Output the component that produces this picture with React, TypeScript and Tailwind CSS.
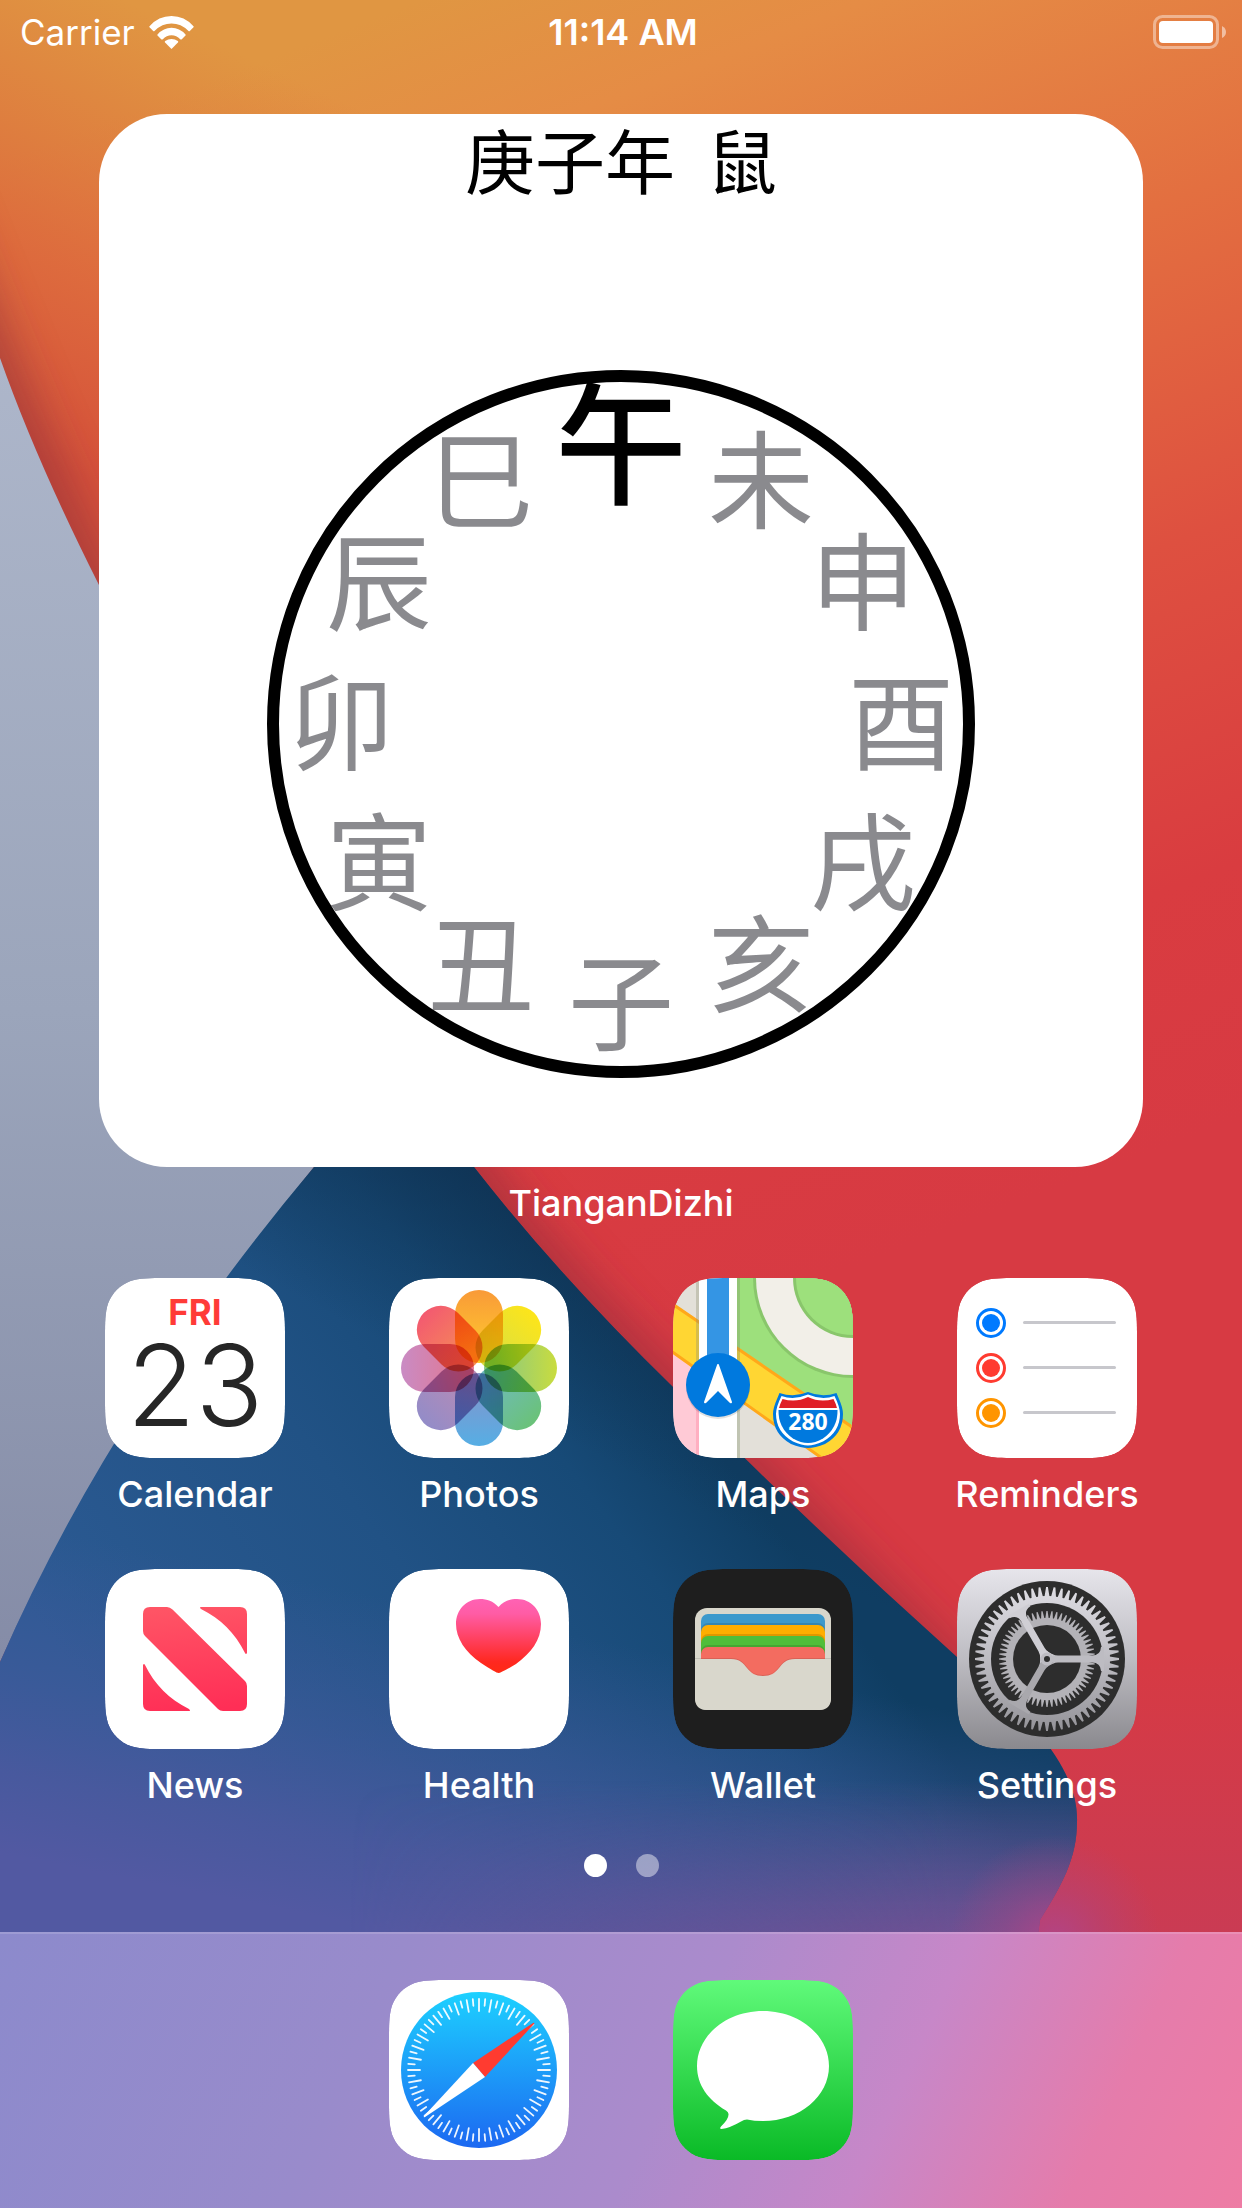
import type { ReactNode } from "react";

/* Continuous-corner outline used by every home-screen icon (180 unit box). */
function squircle(size: number, r: number): string {
  const a = 1.528665 * r;
  const b = 1.088493 * r;
  const c = 0.868407 * r;
  const d = 0.631494 * r;
  const e = 0.074911 * r;
  const f = 0.372824 * r;
  const g = 0.16906 * r;
  const s = size;
  return [
    `M${a},0 H${s - a}`,
    `C${s - b},0 ${s - c},0 ${s - d},${e}`,
    `C${s - f},${g} ${s - g},${f} ${s - e},${d}`,
    `C${s},${c} ${s},${b} ${s},${a} V${s - a}`,
    `C${s},${s - b} ${s},${s - c} ${s - e},${s - d}`,
    `C${s - g},${s - f} ${s - f},${s - g} ${s - d},${s - e}`,
    `C${s - c},${s} ${s - b},${s} ${s - a},${s} H${a}`,
    `C${b},${s} ${c},${s} ${d},${s - e}`,
    `C${f},${s - g} ${g},${s - f} ${e},${s - d}`,
    `C0,${s - c} 0,${s - b} 0,${s - a} V${a}`,
    `C0,${b} 0,${c} ${e},${d}`,
    `C${g},${f} ${f},${g} ${d},${e}`,
    `C${c},0 ${b},0 ${a},0 Z`,
  ].join(" ");
}

const ICON_OUTLINE = squircle(180, 40.5);

function gear(tips: number, roots: number, teeth: number): string {
  const step = (Math.PI * 2) / teeth;
  const pt = (r: number, t: number) =>
    `${(90 + r * Math.cos(t)).toFixed(2)},${(90 + r * Math.sin(t)).toFixed(2)}`;
  const points: string[] = [];
  for (let i = 0; i < teeth; i++) {
    const t = i * step;
    points.push(pt(roots, t - step * 0.38), pt(tips, t - step * 0.12), pt(tips, t + step * 0.12), pt(roots, t + step * 0.38));
  }
  return `M${points.join("L")}Z`;
}

function IconFrame({ id, fill, children }: { id: string; fill: string; children?: ReactNode }) {
  return (
    <svg viewBox="0 0 180 180" className="isolate size-[180px]" aria-hidden="true">
      <defs>
        <clipPath id={`${id}-clip`}>
          <path d={ICON_OUTLINE} />
        </clipPath>
        <linearGradient id="settings-bg" gradientUnits="userSpaceOnUse" x1="0" y1="0" x2="0" y2="180">
          <stop offset="0" stopColor="#e6e5eb" />
          <stop offset="0.5" stopColor="#bdbcc2" />
          <stop offset="1" stopColor="#8a898e" />
        </linearGradient>
        <linearGradient id="messages-bg" x1="0" y1="0" x2="0" y2="1">
          <stop offset="0" stopColor="#60fa7a" />
          <stop offset="1" stopColor="#0aba26" />
        </linearGradient>
      </defs>
      <g clipPath={`url(#${id}-clip)`}>
        <path d={ICON_OUTLINE} fill={fill} />
        {children}
      </g>
    </svg>
  );
}

function CalendarIcon() {
  return (
    <IconFrame id="calendar" fill="#fff">
      <text x="90" y="47" textAnchor="middle" className="fill-[#ff3b37] font-['Inter',sans-serif] text-[35px] font-bold">
        FRI
      </text>
      <text x="90" y="148" textAnchor="middle" className="fill-[#262626] font-['Inter',sans-serif] text-[112px] font-light">
        23
      </text>
    </IconFrame>
  );
}

const PETALS = [
  { angle: 0, outer: "#f99a38", inner: "#fec92e" },
  { angle: 45, outer: "#fde51a", inner: "#d8df42" },
  { angle: 90, outer: "#c9dc3f", inner: "#86c884" },
  { angle: 135, outer: "#6ac278", inner: "#70babf" },
  { angle: 180, outer: "#56aee4", inner: "#8494cc" },
  { angle: 225, outer: "#938cc8", inner: "#ba8bb4" },
  { angle: 270, outer: "#c98bc4", inner: "#e37790" },
  { angle: 315, outer: "#f35a70", inner: "#f58d56" },
];

function PhotosIcon() {
  return (
    <IconFrame id="photos" fill="#fff">
      {PETALS.map((p) => (
        <g key={p.angle} className="mix-blend-multiply">
          <linearGradient id={`petal-${p.angle}`} gradientUnits="userSpaceOnUse" x1="90" y1="12" x2="90" y2="76">
            <stop offset="0" stopColor={p.outer} />
            <stop offset="1" stopColor={p.inner} />
          </linearGradient>
          <rect x="66" y="12" width="48" height="73" rx="24" fill={`url(#petal-${p.angle})`} transform={`rotate(${p.angle} 90 90)`} />
        </g>
      ))}
    </IconFrame>
  );
}

function MapsIcon() {
  return (
    <IconFrame id="maps" fill="#e3e0d9">
      <path d="M0 73 L26 91 V180 H0Z" fill="#ffcad6" />
      <path d="M64 0 H180 V150 L64 70Z" fill="#9de07c" />
      <circle cx="180" cy="0" r="100" fill="#89c66b" />
      <circle cx="180" cy="0" r="97" fill="#f2efe8" />
      <circle cx="180" cy="0" r="60" fill="#89c66b" />
      <circle cx="180" cy="0" r="57" fill="#9de07c" />
      <path d="M-2 24 L182 150 V203 L-2 72Z" fill="#ffd633" />
      <path d="M-2 25 L182 151 M-2 73 L160 188" stroke="#ffa81a" strokeWidth="3" />
      <path d="M23 0 H26 V180 H23Z" fill="#8d8f74" opacity="0.35" />
      <path d="M23 89 H26 V180 H23Z" fill="#ffafc1" />
      <path d="M64 0 H67 V180 H64Z" fill="#7d8f6a" opacity="0.35" />
      <path d="M26 0 H64 V180 H26Z" fill="#fff" />
      <path d="M34 0 H56 V100 H34Z" fill="#3495e4" />
      <circle cx="45" cy="109" r="32" fill="#000" opacity="0.12" />
      <circle cx="45" cy="107" r="32" fill="#0079de" />
      <path d="M45 86 Q46 86 46 87 L59 124 Q59 126 57 125 L45 113 L33 125 Q31 126 31 124 L44 87 Q44 86 45 86Z" fill="#fff" />
      <path
        d="M106.500 115 Q121 120 135 114 Q149 120 163.500 115 L166 121 Q170 130 170 136 Q170 156 152 166 Q142 170 135 170 Q128 170 118 166 Q100 156 100 136 Q100 130 104 121Z"
        fill="#0079de"
      />
      <path
        d="M108.500 118 Q121 122.500 135 116.500 Q149 122.500 161.500 118 Q167 129 167 136 Q167 154 150 163.500 Q141 167.500 135 167.500 Q129 167.500 120 163.500 Q103 154 103 136 Q103 129 108.500 118Z"
        fill="#fff"
      />
      <path d="M109.500 121 Q123 125 135 119 Q147 125 160.500 121 Q163 126 164 130 H106 Q107 126 109.500 121Z" fill="#e01f26" />
      <path d="M105.500 132 H164.500 Q165 150 150 160.500 Q142 165 135 165 Q128 165 120 160.500 Q105 150 105.500 132Z" fill="#0079de" />
      <text x="135" y="152" textAnchor="middle" className="fill-white font-['Open_Sans',sans-serif] text-[23px] font-bold">
        280
      </text>
    </IconFrame>
  );
}

function RemindersIcon() {
  const rows = [
    { y: 45, color: "#007aff" },
    { y: 90, color: "#ff3b30" },
    { y: 135, color: "#ff9500" },
  ];
  return (
    <IconFrame id="reminders" fill="#fff">
      {rows.map((row) => (
        <g key={row.y}>
          <circle cx="34" cy={row.y} r="13.5" fill="none" stroke={row.color} strokeWidth="3" />
          <circle cx="34" cy={row.y} r="9" fill={row.color} />
          <path d={`M67.500 ${row.y - 0.5} H157.500`} stroke="#c7c7cc" strokeWidth="3" strokeLinecap="round" />
        </g>
      ))}
    </IconFrame>
  );
}

function NewsIcon() {
  return (
    <IconFrame id="news" fill="#fff">
      <linearGradient id="news-red" gradientUnits="userSpaceOnUse" x1="80" y1="38" x2="92" y2="142">
        <stop offset="0" stopColor="#ff5465" />
        <stop offset="1" stopColor="#ff2e56" />
      </linearGradient>
      <g fill="url(#news-red)">
        <path d="M45 38 H62 Q65 38 67.500 40.500 L140 112 Q142 114 142 117 V135 Q142 142 135 142 H118 Q115 142 113 140 L40 67 Q38 65 38 62 V45 Q38 38 45 38Z" />
        <path d="M96 38 H135 Q142 38 142 45 V84 Q141 86 140 84 C130 64 116 50 96 40 Q94 38 96 38Z" />
        <path d="M84 142 H45 Q38 142 38 135 V96 Q39 94 40 96 C50 116 64 130 84 140 Q86 142 84 142Z" />
      </g>
    </IconFrame>
  );
}

function HealthIcon() {
  return (
    <IconFrame id="health" fill="#fff">
      <linearGradient id="heart" x1="0" y1="0" x2="0" y2="1">
        <stop offset="0" stopColor="#ff62b4" />
        <stop offset="0.2" stopColor="#ff5ca5" />
        <stop offset="0.85" stopColor="#ff2820" />
        <stop offset="1" stopColor="#ff2a14" />
      </linearGradient>
      <path
        d="M109.500 38 C115 32 121 30 128 30 C142 30 152 41 152 55 C152 71 142 84 127 95 Q112 104 109.500 104 Q107 104 92 94 C76 83 67 69 67 55 C67 41 77 30 91 30 C98 30 104 32 109.500 38Z"
        fill="url(#heart)"
      />
    </IconFrame>
  );
}

function WalletIcon() {
  const cards = [
    { y: 45, color: "#3c99cc" },
    { y: 56, color: "#ffae00" },
    { y: 67, color: "#50be3a" },
    { y: 78, color: "#f36c60" },
  ];
  return (
    <IconFrame id="wallet" fill="#1e1e1e">
      <clipPath id="wallet-cards">
        <path d="M28 45 H152 V112 H28Z" />
      </clipPath>
      <rect x="22" y="39" width="136" height="102" rx="12" fill="#d9d7cc" />
      <g clipPath="url(#wallet-cards)">
        {cards.map((card) => (
          <g key={card.y}>
            {card.y > 45 && <rect x="28" y={card.y - 2} width="124" height="60" rx="7" fill="#000" opacity="0.12" />}
            <rect x="28" y={card.y} width="124" height="60" rx="7" fill={card.color} />
          </g>
        ))}
      </g>
      <path
        d="M22 89 H58 C67 89 70 93 74 98 C78 103 82 106 90 106 C98 106 102 103 106 98 C110 93 113 89 122 89 H158 V91 H122 L90 110 L58 91 H22Z"
        fill="#000"
        opacity="0.1"
      />
      <path
        d="M22 90 H58 C67 90 70 94 74 99 C78 104 82 107 90 107 C98 107 102 104 106 99 C110 94 113 90 122 90 H158 V129 Q158 141 146 141 H34 Q22 141 22 129Z"
        fill="#d9d7cc"
      />
    </IconFrame>
  );
}

function SettingsIcon() {
  return (
    <IconFrame id="settings" fill="url(#settings-bg)">
      <circle cx="90" cy="90" r="78" fill="#2d2d2d" />
      <path d={gear(72, 62.5, 60)} fill="url(#settings-bg)" />
      <circle cx="90" cy="90" r="63" fill="url(#settings-bg)" />
      <circle cx="90" cy="90" r="56" fill="#2d2d2d" />
      <path d={gear(48, 41, 60)} fill="#b3b2b7" />
      <circle cx="90" cy="90" r="34" fill="#2d2d2d" />
      {[
        { angle: 0, fill: "#bdbcc2" },
        { angle: 120, fill: "#a9a8ad" },
        { angle: 240, fill: "#cfced4" },
      ].map((spoke) => (
        <path
          key={spoke.angle}
          d="M90 82 Q96 86.500 101 86.500 H135 Q143.500 86.500 144 78 L147 78 V102 L144 102 Q143.500 93.500 135 93.500 H101 Q96 93.500 90 98Z"
          fill={spoke.fill}
          transform={`rotate(${spoke.angle} 90 90)`}
        />
      ))}
      <circle cx="90" cy="90" r="6.500" fill="#bdbcc2" />
      <circle cx="90" cy="90" r="3" fill="#2d2d2d" />
    </IconFrame>
  );
}

function SafariIcon() {
  const ticks = Array.from({ length: 72 }, (_, i) => i);
  return (
    <IconFrame id="safari" fill="#fff">
      <linearGradient id="compass" x1="0" y1="0" x2="0" y2="1">
        <stop offset="0" stopColor="#1dd1ff" />
        <stop offset="1" stopColor="#1c68f1" />
      </linearGradient>
      <circle cx="90" cy="90" r="78" fill="url(#compass)" />
      {ticks.map((i) => (
        <path
          key={i}
          d={i % 2 === 0 ? "M90 19 V31" : "M90 19 V25.500"}
          stroke="#fff"
          strokeWidth="1.800"
          strokeLinecap="round"
          opacity="0.92"
          transform={`rotate(${i * 5} 90 90)`}
        />
      ))}
      <path d="M84 83 L144 43 Q146 42 145 44 L96 97Z" fill="#ff3b30" />
      <path d="M84 83 L96 97 L36 137 Q34 138 35 136Z" fill="#fff" />
    </IconFrame>
  );
}

function MessagesIcon() {
  return (
    <IconFrame id="messages" fill="url(#messages-bg)">
      <path
        d="M90 31 C126.500 31 156 55.500 156 86 C156 116.500 126.500 141 90 141 Q81 141 74 139.500 Q71 139.500 68 141.500 Q57 148 48.500 149 Q46 149 48 146.500 Q56 139 55.500 134 Q55.500 132 53 130.500 C35 120 24 105 24 86 C24 55.500 53.500 31 90 31Z"
        fill="#fff"
      />
    </IconFrame>
  );
}

function Wallpaper() {
  return (
    <svg
      viewBox="0 0 1242 2208"
      preserveAspectRatio="none"
      className="pointer-events-none absolute inset-0 -z-10 size-full"
      aria-hidden="true"
    >
      <defs>
        <linearGradient id="sunset" gradientUnits="userSpaceOnUse" x1="420" y1="0" x2="900" y2="1250">
          <stop offset="0" stopColor="#e09642" />
          <stop offset="0.12" stopColor="#e58c45" />
          <stop offset="0.34" stopColor="#e36f40" />
          <stop offset="0.58" stopColor="#de5040" />
          <stop offset="0.82" stopColor="#d93c40" />
          <stop offset="1" stopColor="#d73a43" />
        </linearGradient>
        <linearGradient id="ember" gradientUnits="userSpaceOnUse" x1="190" y1="30" x2="0" y2="440">
          <stop offset="0" stopColor="#dd6a3c" stopOpacity="0" />
          <stop offset="0.6" stopColor="#dc643c" stopOpacity="0.85" />
          <stop offset="1" stopColor="#d4503a" stopOpacity="1" />
        </linearGradient>
        <linearGradient id="rose" gradientUnits="userSpaceOnUse" x1="0" y1="1650" x2="0" y2="1950">
          <stop offset="0" stopColor="#c33c5c" stopOpacity="0" />
          <stop offset="1" stopColor="#c33c5c" stopOpacity="0.7" />
        </linearGradient>
        <linearGradient id="slate" gradientUnits="userSpaceOnUse" x1="0" y1="360" x2="0" y2="1660">
          <stop offset="0" stopColor="#adb6ca" />
          <stop offset="0.5" stopColor="#9ba5bb" />
          <stop offset="1" stopColor="#858ca7" />
        </linearGradient>
        <linearGradient id="sea" gradientUnits="userSpaceOnUse" x1="150" y1="1770" x2="665" y2="1380">
          <stop offset="0" stopColor="#2c5a93" />
          <stop offset="0.5" stopColor="#215285" />
          <stop offset="0.8" stopColor="#174a77" />
          <stop offset="1" stopColor="#0f3d62" />
        </linearGradient>
        <linearGradient id="sea-top" gradientUnits="userSpaceOnUse" x1="360" y1="1330" x2="450" y2="1160">
          <stop offset="0" stopColor="#0f3455" stopOpacity="0" />
          <stop offset="1" stopColor="#0f3050" stopOpacity="0.7" />
        </linearGradient>
        <linearGradient id="violet" gradientUnits="userSpaceOnUse" x1="500" y1="1620" x2="436" y2="1940">
          <stop offset="0" stopColor="#405a9c" stopOpacity="0" />
          <stop offset="0.45" stopColor="#445a9d" stopOpacity="0.55" />
          <stop offset="0.75" stopColor="#4b599f" stopOpacity="0.9" />
          <stop offset="1" stopColor="#5259a2" stopOpacity="1" />
        </linearGradient>
        <linearGradient id="plum" gradientUnits="userSpaceOnUse" x1="900" y1="1780" x2="900" y2="1950">
          <stop offset="0" stopColor="#7a4f90" stopOpacity="0" />
          <stop offset="1" stopColor="#7d4f92" stopOpacity="0.85" />
        </linearGradient>
        <linearGradient id="plum-fade" gradientUnits="userSpaceOnUse" x1="350" y1="0" x2="950" y2="0">
          <stop offset="0" stopColor="#000" />
          <stop offset="1" stopColor="#fff" />
        </linearGradient>
        <mask id="plum-mask">
          <rect y="1700" width="1242" height="508" fill="url(#plum-fade)" />
        </mask>
        <radialGradient id="magenta" gradientUnits="userSpaceOnUse" cx="1055" cy="1940" r="105">
          <stop offset="0" stopColor="#b0458a" stopOpacity="0.9" />
          <stop offset="0.5" stopColor="#ac4583" stopOpacity="0.4" />
          <stop offset="1" stopColor="#b0457c" stopOpacity="0" />
        </radialGradient>
        <filter id="soft" filterUnits="userSpaceOnUse" x="-200" y="0" width="1600" height="2208">
          <feGaussianBlur stdDeviation="22" />
        </filter>
      </defs>
      <rect width="1242" height="2208" fill="url(#sunset)" />
      <rect width="600" height="900" fill="url(#ember)" />
      <rect y="1600" width="1242" height="608" fill="url(#rose)" />
      <path
        d="M-100 130 Q30 470 96 592 L474 1180 Q560 1290 673 1400 Q820 1550 980 1710"
        fill="none"
        stroke="#862a3a"
        strokeWidth="46"
        opacity="0.55"
        filter="url(#soft)"
      />
      <path d="M0 358 Q36 460 99 585 Q250 860 400 1060 L314 1167 Q110 1420 0 1662Z" fill="url(#slate)" />
      <clipPath id="sea-area">
        <path d="M314 1167 L400 1060 L474 1167 Q560 1277 673 1387 Q810 1525 957 1657 L1035 1729 C1066 1765 1078 1795 1077 1822 C1077 1858 1062 1885 1040 1920 L1000 2208 H0 V1662 Q110 1410 314 1167Z" />
      </clipPath>
      <g clipPath="url(#sea-area)">
        <rect y="1040" width="1242" height="1168" fill="url(#sea)" />
        <rect y="1040" width="1242" height="1168" fill="url(#sea-top)" />
        <rect y="1500" width="1242" height="708" fill="url(#violet)" />
        <rect y="1700" width="1242" height="508" fill="url(#plum)" mask="url(#plum-mask)" />
      </g>
      <rect x="850" y="1780" width="392" height="260" fill="url(#magenta)" />
    </svg>
  );
}

function StatusBar() {
  return (
    <header className="grid h-16 grid-cols-3 items-center pr-4 pl-5 text-white">
      <div className="flex items-center gap-3.5">
        <span className="text-[35px] leading-none">Carrier</span>
        <svg viewBox="0 0 45 33" className="h-[33px] w-[45px]" role="img" aria-label="Wi-Fi" fill="#fff">
          <path d="M22.500 33 L15.800 26.300 Q15.600 25.600 16.200 25 Q19 23 22.500 23 Q26 23 28.800 25 Q29.400 25.600 29.200 26.300Z" />
          <path d="M8.500 18.500 Q14.500 11.800 22.500 11.800 Q30.500 11.800 36.500 18.500 Q37 19 36.500 19.600 L32.800 23.200 Q32 23.800 31.200 23.200 Q27.500 19.300 22.500 19.300 Q17.500 19.300 13.800 23.200 Q13 23.800 12.200 23.200 L8.500 19.600 Q8 19 8.500 18.500Z" />
          <path d="M0.500 10.200 Q9.500 0 22.500 0 Q35.500 0 44.500 10.200 Q45 10.700 44.500 11.200 L40.800 14.900 Q40.200 15.400 39.500 14.900 Q32 7.500 22.500 7.500 Q13 7.500 5.500 14.900 Q4.800 15.400 4.200 14.900 L0.500 11.200 Q0 10.700 0.500 10.200Z" />
        </svg>
      </div>
      <time className="text-center text-[36px] leading-none font-semibold">11:14 AM</time>
      <svg viewBox="0 0 73 34" className="h-[34px] w-[73px] justify-self-end" role="img" aria-label="Battery full">
        <rect x="1.500" y="1.500" width="63" height="31" rx="8" fill="none" stroke="#fff" strokeOpacity="0.42" strokeWidth="3" />
        <rect x="6" y="6" width="54" height="22" rx="4" fill="#fff" />
        <path d="M69 11 Q73 13 73 17 Q73 21 69 23Z" fill="#fff" fillOpacity="0.5" />
      </svg>
    </header>
  );
}

const BRANCHES = ["午", "未", "申", "酉", "戌", "亥", "子", "丑", "寅", "卯", "辰", "巳"];

function BranchDial() {
  return (
    <svg viewBox="0 0 708 708" className="mt-[166px] w-[708px] max-w-full overflow-visible" role="img" aria-label="地支">
      <circle cx="354" cy="354" r="348" fill="none" stroke="#000" strokeWidth="12" />
      {BRANCHES.map((branch, i) => {
        const angle = (i * Math.PI) / 6;
        const current = i === 0;
        return (
          <text
            key={branch}
            x={Math.round(354 + 280 * Math.sin(angle))}
            y={Math.round(354 - 280 * Math.cos(angle)) + (current ? 50 : 38)}
            textAnchor="middle"
            className={current ? "fill-black text-[132px] font-medium" : "fill-[#3c3c43]/60 text-[106px]"}
          >
            {branch}
          </text>
        );
      })}
    </svg>
  );
}

function Widget() {
  return (
    <section className="mx-[99px] mt-[50px] flex flex-col items-center">
      <div className="flex w-full flex-col items-center rounded-[68px] bg-white pb-[89px] font-['Kaiti_SC','STKaiti','KaiTi','Noto_Sans_CJK_SC',sans-serif] text-black">
        <h1 className="flex gap-8 text-[70px] leading-[90px]">
          <span>庚子年</span>
          <span>鼠</span>
        </h1>
        <BranchDial />
      </div>
      <p className="mt-3.5 text-[36px] leading-[44px] font-medium text-white">TianganDizhi</p>
    </section>
  );
}

function AppShortcut({ name, icon }: { name: string; icon: ReactNode }) {
  return (
    <button type="button" className="flex w-[180px] flex-col items-center gap-3.5 text-[36px] leading-[44px] font-medium whitespace-nowrap text-white">
      {icon}
      {name}
    </button>
  );
}

const APPS = [
  { name: "Calendar", icon: <CalendarIcon /> },
  { name: "Photos", icon: <PhotosIcon /> },
  { name: "Maps", icon: <MapsIcon /> },
  { name: "Reminders", icon: <RemindersIcon /> },
  { name: "News", icon: <NewsIcon /> },
  { name: "Health", icon: <HealthIcon /> },
  { name: "Wallet", icon: <WalletIcon /> },
  { name: "Settings", icon: <SettingsIcon /> },
];

export default function App() {
  return (
    <div className="relative isolate flex min-h-screen flex-col overflow-hidden font-['Inter',sans-serif]">
      <Wallpaper />
      <StatusBar />
      <main className="flex flex-1 flex-col">
        <Widget />
        <div className="mx-[105px] mt-[53px] grid grid-cols-[repeat(4,180px)] justify-between gap-y-[53px]">
          {APPS.map((app) => (
            <AppShortcut key={app.name} name={app.name} icon={app.icon} />
          ))}
        </div>
        <nav className="mt-[47px] mb-[55px] flex justify-center gap-[29px]" aria-label="Pages">
          <button type="button" aria-label="Page 1" aria-current="page" className="size-[23px] rounded-full bg-white" />
          <button type="button" aria-label="Page 2" className="size-[23px] rounded-full bg-white/45" />
        </nav>
      </main>
      <footer className="flex justify-center gap-[104px] border-t-2 border-white/15 bg-[linear-gradient(115deg,#8c8acc_0%,#998bcb_30%,#ab8bcc_54%,#c787c8_71%,#e57cab_87%,#ee7ca4_100%)] bg-origin-border pt-[46px] pb-12">
        <button type="button" aria-label="Safari">
          <SafariIcon />
        </button>
        <button type="button" aria-label="Messages">
          <MessagesIcon />
        </button>
      </footer>
    </div>
  );
}
